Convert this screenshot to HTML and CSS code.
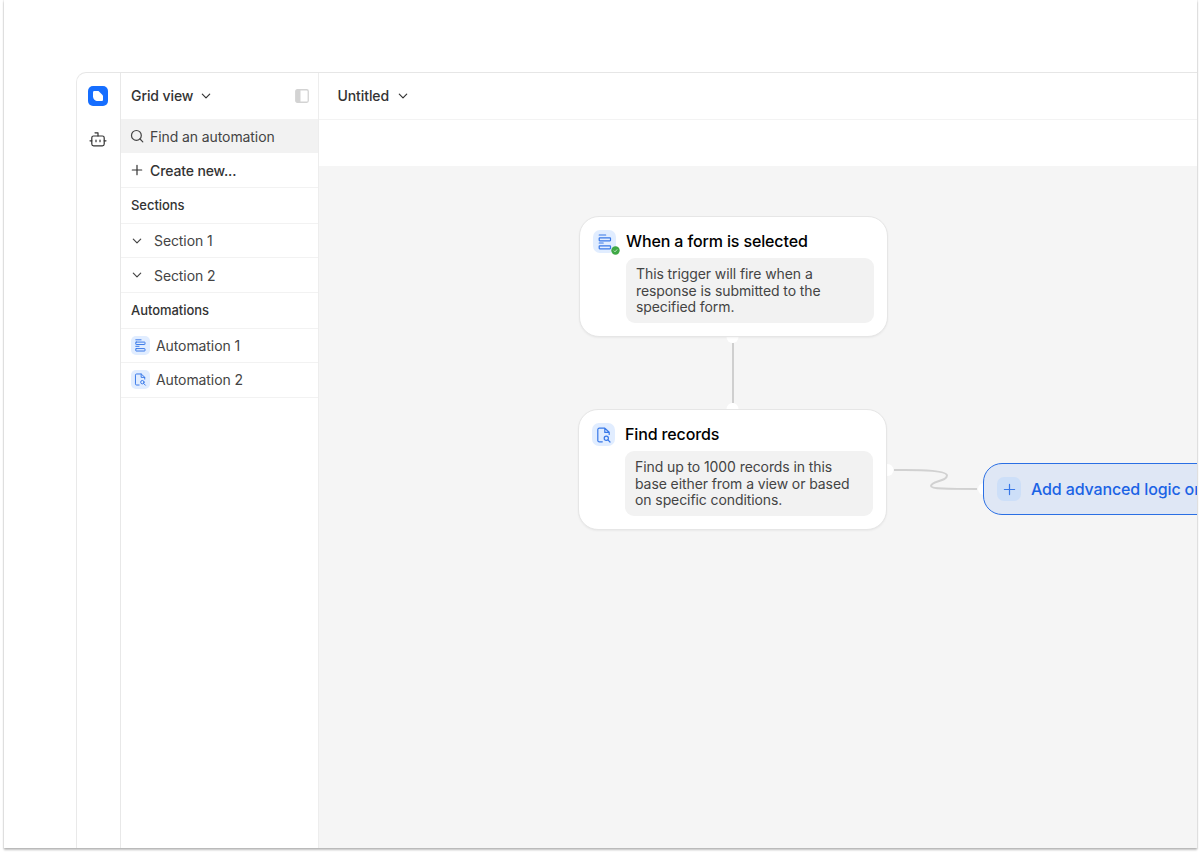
FILE: index.html
```
<!DOCTYPE html>
<html lang="en">
<head>
    <meta charset="UTF-8">
    <meta name="viewport" content="width=device-width, initial-scale=1.0">
    <title>Automations</title>
    <link rel="stylesheet" href="styles.css">
</head>
<body>
    <!-- shared icons -->
    <svg class="icon-defs">
        <symbol id="chevron" viewBox="0 0 10 10">
            <path d="M1.3 3.2 5 6.9 8.7 3.2" />
        </symbol>
        <symbol id="form" viewBox="0 0 16 16">
            <path d="M2.2 1h6.500M2.200 9h4" />
            <rect x="2.200" y="3.800" width="11.300" height="3" rx=".5" />
            <rect x="2.200" y="11.800" width="11.300" height="3" rx=".5" />
        </symbol>
        <symbol id="file-search" viewBox="0 0 16 16">
            <path d="M6.3 14.8H3.2a1.4 1.4 0 0 1-1.4-1.400V2.600a1.400 1.400 0 0 1 1.400-1.400h5.600l4.400 4v2.300M8.800 1.200v4.200h4.400" />
            <circle cx="10.300" cy="11.300" r="2.100" />
            <path d="m11.900 12.900 2.100 2.100" />
        </symbol>
    </svg>

    <div class="frame">
        <div class="app">
            <nav class="rail">
                <div class="logo">
                    <svg width="10" height="10" viewBox="0 0 10 10"><path d="M1.300 0h4.200L10 4.500v4.200c0 .7-.6 1.300-1.300 1.300H4.800C2.100 10 0 7.900 0 5.200V1.300C0 .6.6 0 1.300 0z" fill="#fff" /></svg>
                </div>
                <svg class="icon robot" viewBox="0 0 18 18">
                    <path d="M6 1.800h3V5M1 9.800h1.800M15.200 9.800H17M7 9v1.700M11 9v1.700" />
                    <rect x="2.800" y="5" width="12.400" height="9.800" rx="1.800" />
                </svg>
            </nav>

            <aside class="sidebar">
                <div class="view-header">
                    <span>Grid view</span>
                    <svg class="icon chevron"><use href="#chevron" /></svg>
                    <svg class="panel-toggle" viewBox="0 0 14 14">
                        <rect x=".75" y=".75" width="12.500" height="12.500" rx="1.500" fill="#fff" stroke="#d3d3d3" stroke-width="1.300" />
                        <path d="M1 1h4.500v12H1z" fill="#d3d3d3" />
                    </svg>
                </div>
                <div class="row search">
                    <svg class="icon small-icon" viewBox="0 0 14 14"><circle cx="6.400" cy="6.400" r="4.900" /><path d="m10 10 2.800 2.800" /></svg>
                    <span>Find an automation</span>
                </div>
                <div class="row create">
                    <svg class="icon small-icon" viewBox="0 0 14 14"><path d="M7 2.300v9.400M2.300 7h9.400" /></svg>
                    <span>Create new...</span>
                </div>
                <div class="row heading">Sections</div>
                <div class="row section">
                    <svg class="icon chevron"><use href="#chevron" /></svg>
                    <span>Section 1</span>
                </div>
                <div class="row section section-last">
                    <svg class="icon chevron"><use href="#chevron" /></svg>
                    <span>Section 2</span>
                </div>
                <div class="row heading">Automations</div>
                <div class="row automation">
                    <span class="badge"><svg class="icon"><use href="#form" /></svg></span>
                    <span>Automation 1</span>
                </div>
                <div class="row automation automation-last">
                    <span class="badge"><svg class="icon"><use href="#file-search" /></svg></span>
                    <span>Automation 2</span>
                </div>
            </aside>

            <main class="main">
                <header class="topbar">
                    <span>Untitled</span>
                    <svg class="icon chevron"><use href="#chevron" /></svg>
                </header>
                <div class="toolbar"></div>
                <div class="canvas">
                    <svg class="wires" width="879" height="683" viewBox="0 0 879 683">
                        <g fill="#fff">
                            <circle cx="413.500" cy="171" r="6" />
                            <circle cx="413.500" cy="243" r="6" />
                            <circle cx="568.500" cy="304" r="6" />
                            <circle cx="665" cy="323" r="6" />
                        </g>
                        <path d="M414 177v60" stroke="#cfcfcf" stroke-width="2" />
                        <path d="M575 304c32-.5 53 1 53 5.500 0 6-16 5.500-16 10.500 0 3 16 3 46 3" fill="none" stroke="#d1d1d1" stroke-width="2" />
                    </svg>

                    <div class="node node-trigger">
                        <span class="badge">
                            <svg class="icon"><use href="#form" /></svg>
                            <svg class="check" viewBox="0 0 9 9"><circle cx="4.500" cy="4.500" r="4.200" fill="#3ea845" /><path d="m2.800 4.600 1.200 1.200 2.200-2.400" fill="none" stroke="#d9f3da" stroke-width=".8" /></svg>
                        </span>
                        <div class="node-body">
                            <div class="node-title">When a form is selected</div>
                            <div class="node-text">This trigger will fire when a<br>response is submitted to the<br>specified form.</div>
                        </div>
                    </div>

                    <div class="node node-find">
                        <span class="badge"><svg class="icon"><use href="#file-search" /></svg></span>
                        <div class="node-body">
                            <div class="node-title">Find records</div>
                            <div class="node-text">Find up to 1000 records in this<br>base either from a view or based<br>on specific conditions.</div>
                        </div>
                    </div>

                    <div class="add-logic">
                        <span class="badge"><svg class="icon" viewBox="0 0 14 14"><path d="M7 1.500v11M1.500 7h11" /></svg></span>
                        <span>Add advanced logic or</span>
                    </div>
                </div>
            </main>
        </div>
    </div>
</body>
</html>
```
FILE: styles.css
```
* {
    box-sizing: border-box;
}
body {
    margin: 0;
    height: 855px;
    overflow: hidden;
    background: #fff;
    color: #333;
    font-family: Inter, sans-serif;
    font-size: 14px;
    letter-spacing: -0.09px;
}
.icon-defs {
    display: none;
}
.icon {
    flex: none;
    fill: none;
    stroke: currentColor;
    stroke-width: 1.2;
    stroke-linecap: round;
    stroke-linejoin: round;
}
.frame {
    width: 1193px;
    height: 848px;
    margin-left: 4px;
    padding: 72px 0 0 72px;
    overflow: hidden;
    background: #fff;
    box-shadow: 0 2px 2px rgba(0, 0, 0, 0.25), 0 0 1px 1px rgba(0, 0, 0, 0.05);
}
.app {
    display: flex;
    height: 100%;
    border-top: 1px solid #e6e6e6;
    border-left: 1px solid #e9e9e9;
    border-top-left-radius: 10px;
}
.rail {
    flex: none;
    width: 44px;
    display: flex;
    flex-direction: column;
    align-items: center;
    padding: 13px 2px 0 0;
    border-right: 1px solid #e8e8e8;
}
.logo {
    display: flex;
    align-items: center;
    justify-content: center;
    width: 20px;
    height: 20px;
    border-radius: 5px;
    background: #166eff;
}
.robot {
    width: 18px;
    height: 18px;
    margin-top: 25px;
}
.chevron {
    width: 10px;
    height: 10px;
}
.sidebar {
    flex: none;
    width: 198px;
    border-right: 1px solid #ededed;
}
.view-header {
    display: flex;
    align-items: center;
    height: 46px;
    padding: 0 9px 1px 10px;
    gap: 8px;
    font-weight: 500;
}
.panel-toggle {
    width: 14px;
    height: 14px;
    margin-left: auto;
}
.row {
    display: flex;
    align-items: center;
    height: 35px;
    padding-left: 10px;
    border-bottom: 1px solid #f2f2f2;
    color: #444;
}
.search {
    gap: 6px;
    height: 34px;
    padding-left: 9px;
    border-bottom: none;
    background: #f2f2f2;
}
.create {
    gap: 6px;
    padding-left: 9px;
    color: #333;
    font-weight: 500;
    letter-spacing: -0.13px;
}
.small-icon {
    width: 14px;
    height: 14px;
}
.heading {
    height: 36px;
    padding-bottom: 1px;
    color: #333;
    font-size: 13px;
    font-weight: 500;
    letter-spacing: -0.05px;
}
.section {
    gap: 12px;
    height: 34px;
    padding-left: 11px;
}
.section-last {
    height: 35px;
}
.automation {
    gap: 6px;
    height: 34px;
}
.automation-last {
    height: 35px;
    padding-bottom: 1px;
}
.badge {
    flex: none;
    display: flex;
    align-items: center;
    justify-content: center;
    width: 19px;
    height: 19px;
    border-radius: 5px;
    background: #e1edff;
    color: #3878e8;
}
.badge .icon {
    width: 13px;
    height: 13px;
}
.main {
    flex: 1;
    min-width: 0;
    display: flex;
    flex-direction: column;
}
.topbar {
    flex: none;
    display: flex;
    align-items: center;
    gap: 9px;
    height: 47px;
    padding: 0 0 1px 18.500px;
    border-bottom: 1px solid #f3f3f3;
    font-weight: 500;
}
.toolbar {
    flex: none;
    height: 46px;
}
.canvas {
    position: relative;
    flex: 1;
    overflow: hidden;
    background: #f5f5f5;
}
.wires {
    position: absolute;
    top: 0;
    left: 0;
}
.node {
    position: absolute;
    display: flex;
    gap: 10px;
    width: 309px;
    height: 121px;
    padding: 13px 12px 13px 13px;
    border: 1px solid #e6e6e6;
    border-radius: 20px;
    background: #fff;
    box-shadow: 0 1px 2px rgba(0, 0, 0, 0.05);
}
.node-trigger {
    left: 260px;
    top: 50px;
}
.node-find {
    left: 259px;
    top: 243px;
}
.node .badge {
    position: relative;
    width: 23px;
    height: 23px;
    border-radius: 7px;
}
.node .badge .icon {
    width: 16px;
    height: 16px;
}
.check {
    position: absolute;
    right: -4px;
    bottom: -2px;
    width: 9px;
    height: 9px;
}
.node-title {
    height: 28px;
    color: #000;
    font-size: 16px;
    font-weight: 500;
    line-height: 22px;
    letter-spacing: -0.13px;
}
.node-text {
    width: 248px;
    height: 65px;
    padding: 8px 10px;
    border-radius: 9px;
    background: #f2f2f2;
    color: #444;
    font-size: 14px;
    line-height: 16.5px;
    white-space: nowrap;
}
.add-logic {
    position: absolute;
    left: 664px;
    top: 297px;
    display: flex;
    align-items: center;
    gap: 10px;
    width: 300px;
    height: 52px;
    padding-left: 13px;
    border: 1px solid #2a6fe4;
    border-radius: 19px;
    background: #dfe7f5;
    color: #1b63e5;
    font-size: 16px;
    font-weight: 500;
    letter-spacing: -0.13px;
    white-space: nowrap;
}
.add-logic .badge {
    width: 24px;
    height: 24px;
    border-radius: 7px;
    background: #cddff8;
}
.add-logic .icon {
    stroke-width: 1.3;
}
```
